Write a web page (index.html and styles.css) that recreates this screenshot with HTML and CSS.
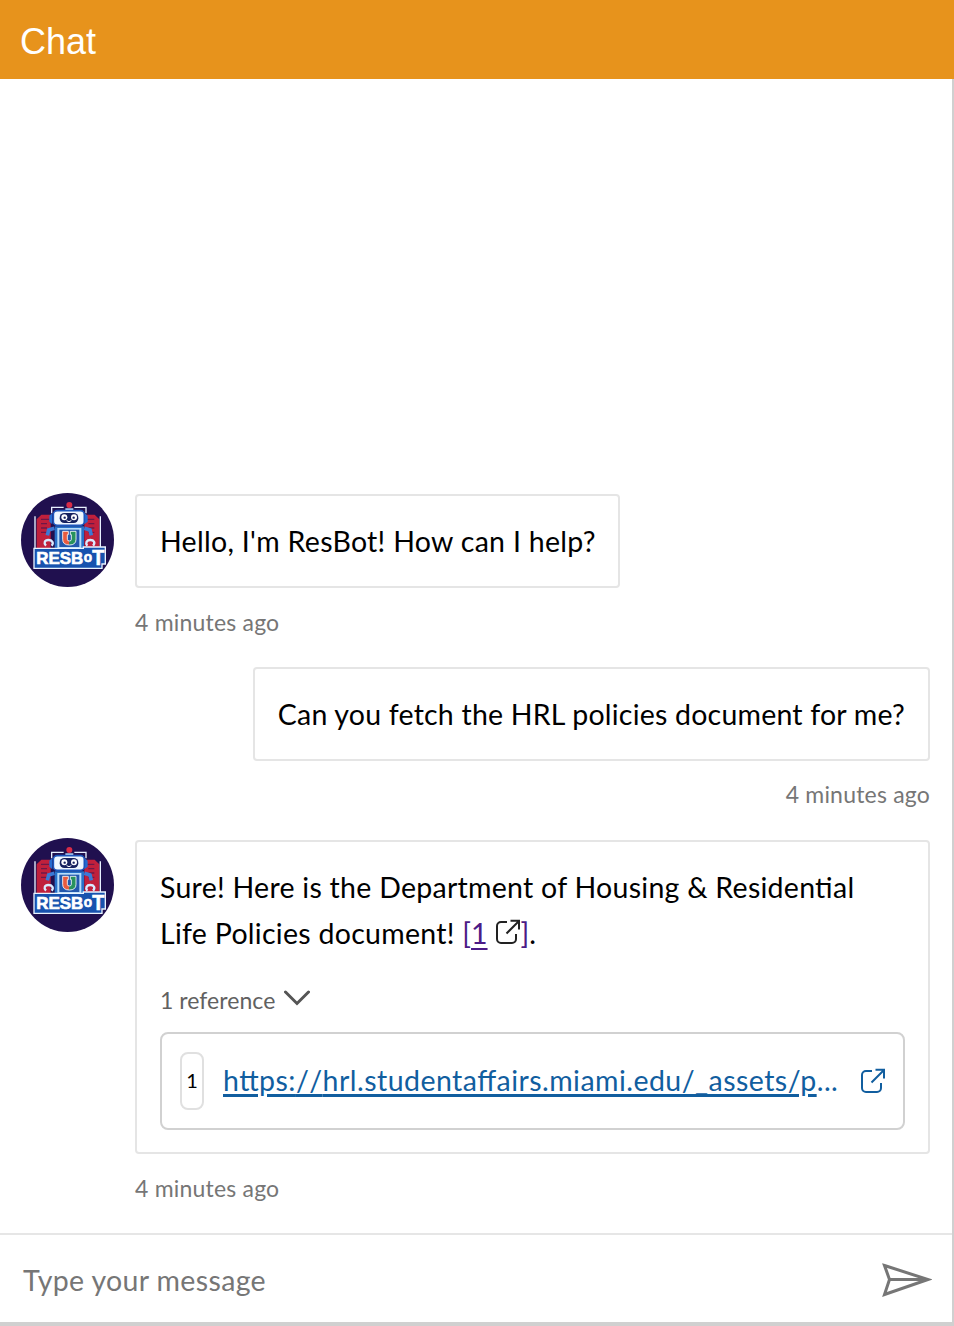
FILE: index.html
```html
<!DOCTYPE html>
<html lang="en">
<head>
<meta charset="utf-8">
<title>Chat</title>
<link rel="stylesheet" href="styles.css">
</head>
<body>
<svg class="defs" width="300" height="310" aria-hidden="true">
  <symbol id="resbot" viewBox="18 24 279 282">
    <ellipse cx="157.500" cy="165" rx="139.500" ry="141" fill="#20104f"/>
    <path d="M65 103l14-14h28v105H65zM208 89h31l14 14v91h-45z" fill="#c0203c"/>
    <path d="M78 103h24M78 116h18M78 129h18M78 142h18M214 103h24M220 116h18M220 129h18M220 142h18" stroke="#6d1848" stroke-width="4"/>
    <path d="M60 192V94M256 192V94M110 85V67h36M178 67h35v18" fill="none" stroke="#e8f0ff" stroke-width="4"/>
    <path d="M112 84l-9 8v18l9 8zM208 84l10 8v18l-10 8z" fill="#246bd0"/>
    <circle cx="163" cy="60" r="9" fill="#d92c47"/>
    <path d="M151 70h24v8h-24z" fill="#b9d9fa"/>
    <rect x="115" y="77" width="93" height="44" rx="12" fill="#eef7ff" stroke="#1c55bb" stroke-width="5"/>
    <rect x="134" y="84" width="56" height="30" rx="14" fill="#16215e"/>
    <circle cx="148" cy="97" r="9" fill="#fff"/><circle cx="177" cy="97" r="9" fill="#fff"/>
    <circle cx="149" cy="98" r="3.500" fill="#16215e"/><circle cx="176" cy="98" r="3.500" fill="#16215e"/>
    <path d="M155 107q7 6 14 0" fill="none" stroke="#fff" stroke-width="3"/>
    <path d="M119 124h88v70h-88z" fill="#2772c9"/>
    <path d="M127 129h72v63h-72z" fill="#b7dcfa"/>
    <path d="M133 134h60v52h-60z" fill="#2358ad"/>
    <path d="M118 130l-17 5-4 16M208 130l17 5 4 16" fill="none" stroke="#3b79d5" stroke-width="11"/>
    <path d="M93 182c-8-8-4-17 7-17 12 0 17 9 10 17M217 182c-7-8-2-17 9-17s16 9 8 17" fill="none" stroke="#d9eaff" stroke-width="7"/>
    <path d="M143 139h17v10h-3v14q0 5 6 5v12q-20 0-20-17z" fill="#e85b40"/>
    <path d="M166 139h17v24q0 17-20 17v-12q6 0 6-5v-14h-3z" fill="#28925d"/>
    <path d="M143 139h17v10h-3v14q0 5 6 5t6-5v-14h-3v-10h17v24q0 17-20 17t-20-17z" fill="none" stroke="#fff" stroke-width="2.500"/>
    <path d="M57 190h148v-4h66v51h-10v13H57z" fill="#1752ae" stroke="#e9f4ff" stroke-width="4"/>
    <g class="logo-word">
      <text x="64" y="236" textLength="141" lengthAdjust="spacingAndGlyphs" font-size="51">RESB</text>
      <text x="206" y="231" textLength="25" lengthAdjust="spacingAndGlyphs" font-size="44">o</text>
      <text x="232" y="241" textLength="36" lengthAdjust="spacingAndGlyphs" font-size="64">T</text>
    </g>
  </symbol>
  <symbol id="open" viewBox="0 0 26 26">
    <path d="M12 3H6a4 4 0 0 0-4 4v13a4 4 0 0 0 4 4h11a4 4 0 0 0 4-4v-5M11.500 14.500L24 2M15.500 1.800H24V10.500" fill="none" stroke="currentColor" stroke-width="2"/>
  </symbol>
</svg>
<div class="chat">
  <header class="header">Chat</header>
  <main class="body">
    <section class="transcript">
      <article class="message">
        <svg class="avatar"><use href="#resbot"/></svg>
        <div class="content">
          <div class="bubble"><span class="t hello">Hello, I'm ResBot! How can I help?</span></div>
          <time class="time">4 minutes ago</time>
        </div>
      </article>
      <article class="message mine">
        <div class="content">
          <div class="bubble"><span class="t ask">Can you fetch the HRL policies document for me?</span></div>
          <time class="time">4 minutes ago</time>
        </div>
      </article>
      <article class="message last">
        <svg class="avatar"><use href="#resbot"/></svg>
        <div class="content">
          <div class="bubble answer">
            <p class="line"><span class="t sure">Sure! Here is the Department of Housing &amp; Residential</span></p>
            <p class="line"><span class="t life">Life Policies document! </span><a class="cite">[<u>1</u><svg class="cite-icon"><use href="#open"/></svg>]</a>.</p>
            <div class="refs"><span class="t reftext">1 reference</span><svg class="chevron" viewBox="0 0 26 16"><path d="M1.500 2L13 13.500 24.500 2" fill="none" stroke="#555" stroke-width="3" stroke-linecap="round"/></svg></div>
            <div class="card">
              <span class="num">1</span>
              <a class="url"><span class="t link">https:<span class="slashes">//</span>hrl.studentaffairs.miami.edu/_assets/p</span><span class="dots">...</span></a>
              <svg class="card-icon"><use href="#open"/></svg>
            </div>
          </div>
          <time class="time">4 minutes ago</time>
        </div>
      </article>
    </section>
    <footer class="sendbox">
      <span class="t placeholder">Type your message</span>
      <svg class="send" viewBox="0 0 50 34"><path d="M2.500 2.500L46 16.500 2.500 31.500 7.500 16.500zM7.500 16.500H46" fill="none" stroke="#767676" stroke-width="3"/></svg>
    </footer>
  </main>
</div>
</body>
</html>
```
FILE: styles.css
```css
* { box-sizing: border-box; }
body { margin: 0; background: #fff; font-family: Lato, "Open Sans", sans-serif; color: #000; font-feature-settings: "liga" 1; }
.defs { position: absolute; }
.chat { width: 954px; height: 1326px; display: flex; flex-direction: column; overflow: hidden; }
.header { height: 79px; flex: none; background: #e7931c; color: #fff; font: 36px/83px "Liberation Sans", Arial, sans-serif; padding-left: 20px; }
.body { flex: 1; display: flex; flex-direction: column; border-right: 2px solid #d0d0d0; border-bottom: 4px solid #d0d0d0; }
.transcript { flex: 1; display: flex; flex-direction: column; justify-content: flex-end; padding: 0 22px 23px 21px; }
.message { display: flex; gap: 21px; margin-bottom: 23px; }
.message.mine { justify-content: flex-end; }
.message.last { margin-bottom: 0; }
.avatar { width: 93px; height: 94px; flex: none; margin-top: -1px; }
.last .avatar { margin-top: -2px; }
.content { display: flex; flex-direction: column; align-items: flex-start; }
.mine .content { align-items: flex-end; }
.last .content { flex: 1; align-items: stretch; }
.bubble { border: 2px solid #e5e5e5; border-radius: 4px; padding: 22px 23px; font-size: 28.500px; line-height: 46px; height: 94px; white-space: nowrap; }
.answer { height: 314px; }
.t { display: inline-block; white-space: pre; }
.hello { letter-spacing: 0.300px; margin-right: -1px; }
.ask { letter-spacing: 0.210px; }
.sure { letter-spacing: 0.270px; }
.life { letter-spacing: 0.280px; }
.time { display: block; height: 56px; padding-top: 13px; font-size: 23px; line-height: 42px; letter-spacing: 0.200px; color: #767676; }
.mine .time { padding-top: 12px; }
.line { margin: 0; height: 46px; }
.cite { color: #4b1b86; }
.cite u { text-decoration-thickness: 2px; text-underline-offset: 4px; }
.cite-icon { width: 26px; height: 26px; margin: 0 0 -1px 7px; color: #222; }
.refs { height: 76px; padding-top: 22px; display: flex; align-items: flex-start; font-size: 23px; line-height: 45px; letter-spacing: 0.050px; color: #616161; }
.chevron { width: 26px; height: 16px; margin: 12px 0 0 9px; }
.card { height: 98px; border: 2px solid #d1d1d1; border-radius: 8px; display: flex; align-items: center; padding: 0 17px 0 18px; }
.num { width: 24px; height: 58px; border: 2px solid #e0e0e0; border-radius: 8px; font-size: 20px; line-height: 52px; text-align: center; }
.url { margin-left: 19px; padding-bottom: 2px; color: #115e9f; flex: 1; }
.link { letter-spacing: 0.460px; text-decoration: underline; text-decoration-thickness: 3px; text-underline-offset: 3px; }
.slashes { font-kerning: none; }
.dots { letter-spacing: 0.500px; }
.card-icon { width: 26px; height: 26px; color: #115e9f; }
.sendbox { height: 89px; border-top: 2px solid #e6e6e6; display: flex; align-items: center; justify-content: space-between; padding: 2px 20px 0 23px; color: #767676; font-size: 28.500px; }
.placeholder { letter-spacing: 0.350px; }
.send { width: 50px; height: 34px; }
.logo-word { font-family: "Liberation Sans", Arial, sans-serif; font-weight: bold; fill: #fff; stroke: #fff; stroke-width: 2px; }
```
